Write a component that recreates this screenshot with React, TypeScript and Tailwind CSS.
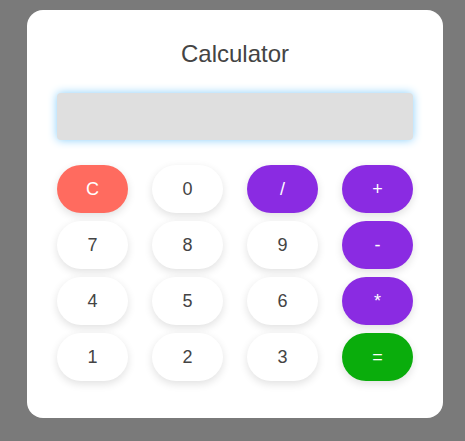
import React, { useState } from 'react';

type Key = { label: string; kind: 'num' | 'op' | 'clear' | 'eq' };

const keys: Key[] = [
  { label: 'C', kind: 'clear' },
  { label: '0', kind: 'num' },
  { label: '/', kind: 'op' },
  { label: '+', kind: 'op' },
  { label: '7', kind: 'num' },
  { label: '8', kind: 'num' },
  { label: '9', kind: 'num' },
  { label: '-', kind: 'op' },
  { label: '4', kind: 'num' },
  { label: '5', kind: 'num' },
  { label: '6', kind: 'num' },
  { label: '*', kind: 'op' },
  { label: '1', kind: 'num' },
  { label: '2', kind: 'num' },
  { label: '3', kind: 'num' },
  { label: '=', kind: 'eq' },
];

const styles: Record<Key['kind'], string> = {
  num: 'bg-white text-[#444]',
  op: 'bg-[#8a2be2] text-white',
  clear: 'bg-[#ff6b5f] text-white',
  eq: 'bg-[#0aad0c] text-white',
};

export default function App() {
  const [value, setValue] = useState('');

  const press = (k: Key) => {
    if (k.kind === 'clear') return setValue('');
    if (k.kind === 'eq') {
      try {
        // eslint-disable-next-line no-new-func
        setValue(String(Function(`return (${value})`)()));
      } catch {
        setValue('Error');
      }
      return;
    }
    setValue(v => v + k.label);
  };

  return (
    <div className="min-h-screen bg-[#7a7a7a] pl-[27px] pt-[10px] font-['Liberation_Sans',Arial,sans-serif]">
      <div className="w-[416px] h-[408px] bg-white rounded-[16px] px-[30px] pt-[30px]">
        <h1 className="text-[24px] leading-[28px] text-[#444] text-center">Calculator</h1>

        {/* Display */}
        <input
          readOnly
          value={value}
          className="mt-[25px] block w-[356px] h-[47px] rounded-[4px] bg-[#dfdfdf] px-3 text-right text-[20px] text-[#333] outline-none shadow-[0_0_10px_rgba(135,206,250,1)]"
        />

        {/* Keypad */}
        <div className="mt-[25px] grid grid-cols-4 gap-x-[24px] gap-y-[8px]">
          {keys.map(k => (
            <button
              key={k.label}
              onClick={() => press(k)}
              className={`h-[48px] rounded-[24px] text-[18px] shadow-[0_3px_8px_rgba(0,0,0,0.12)] ${styles[k.kind]}`}
            >
              {k.label}
            </button>
          ))}
        </div>
      </div>
    </div>
  );
}
